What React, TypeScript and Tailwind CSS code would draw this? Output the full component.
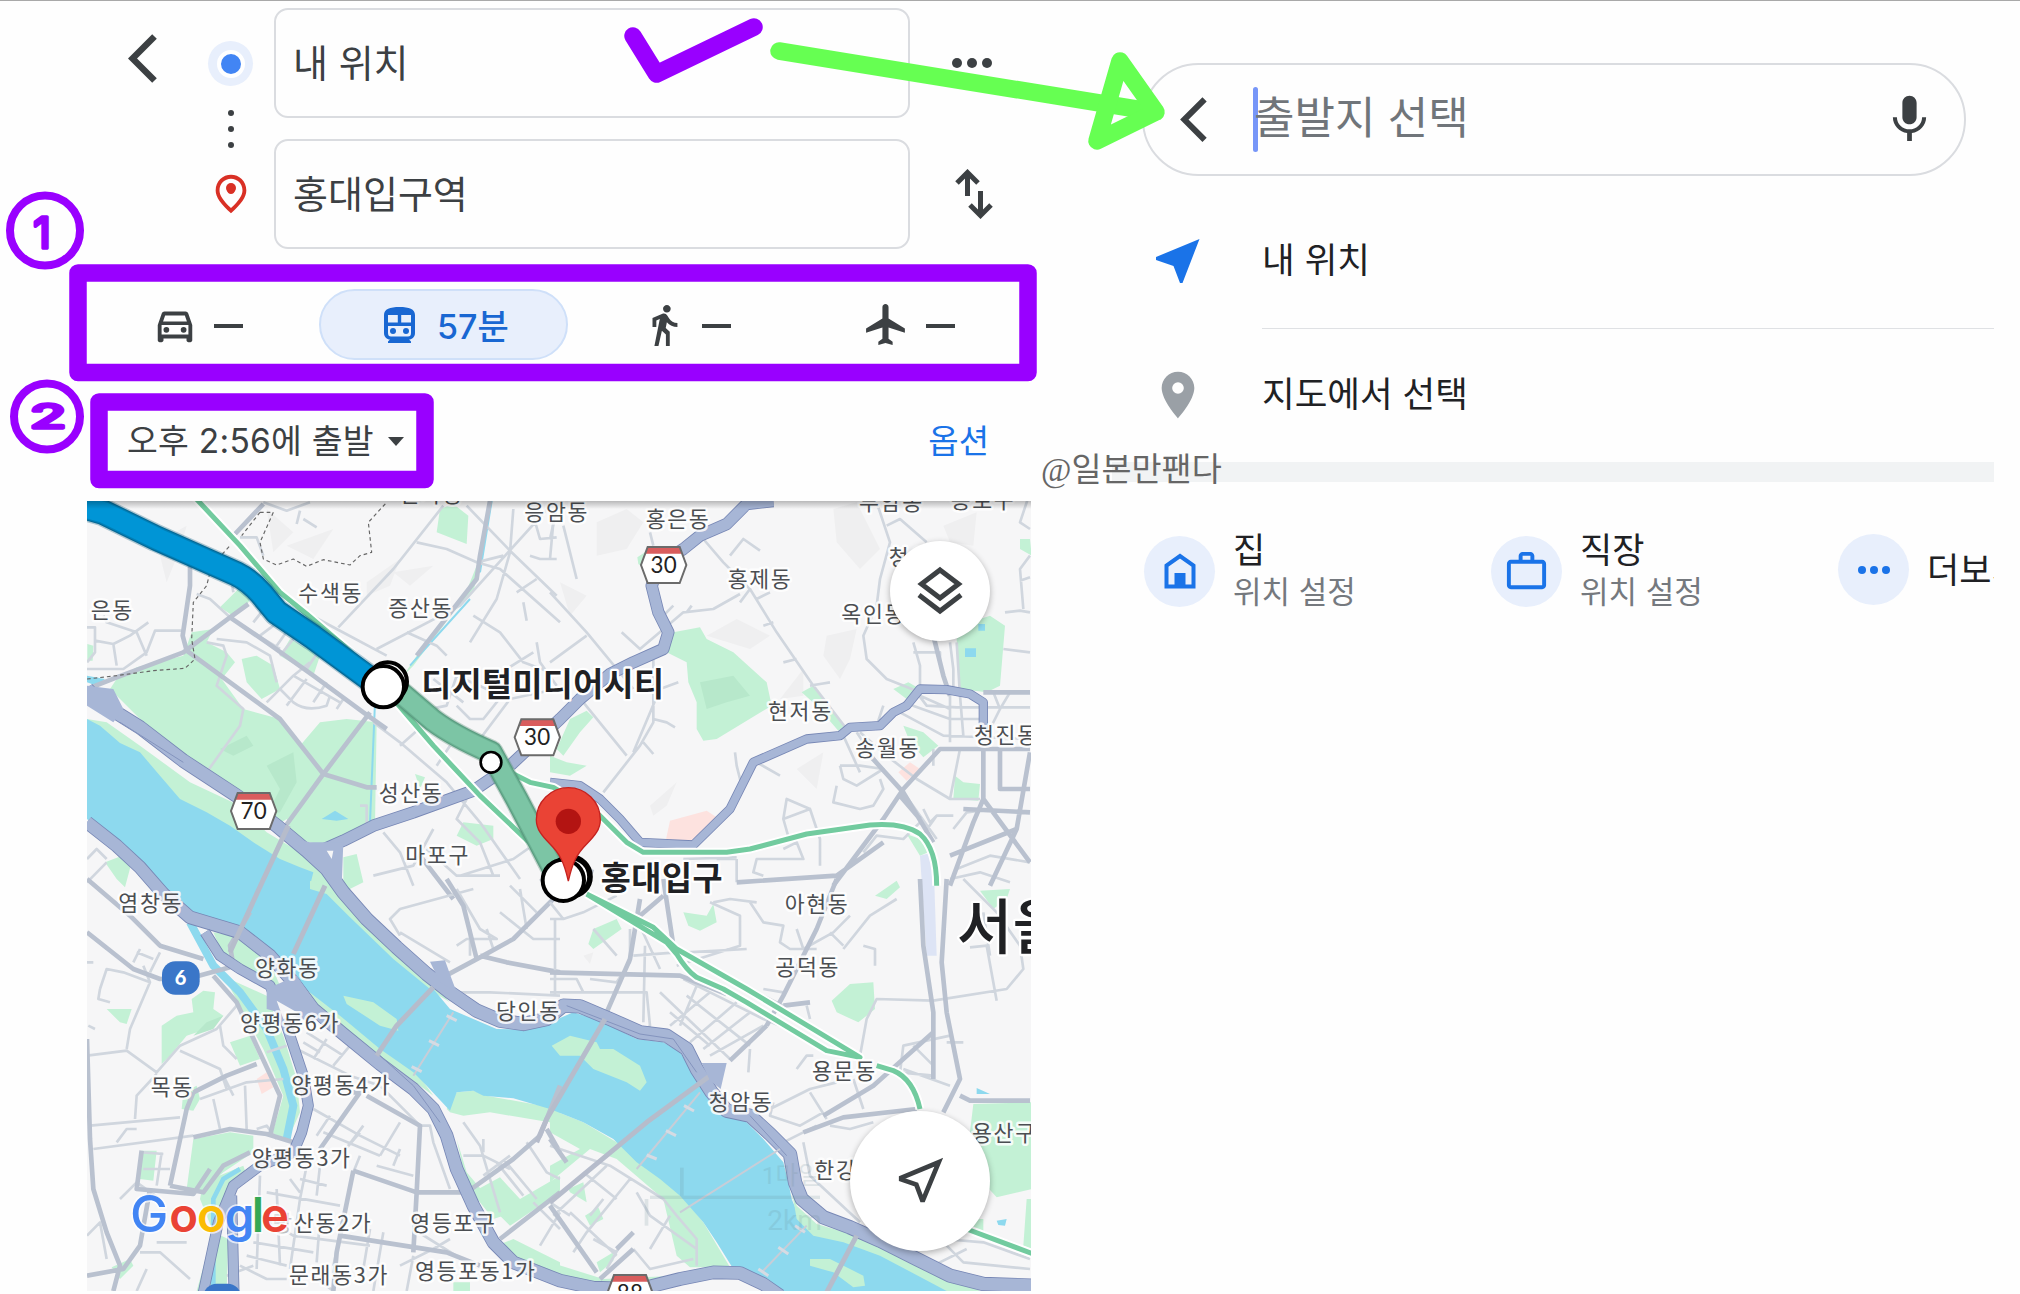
import type { ReactNode } from "react";
import {
  MdDirectionsWalk,
  MdFlight,
  MdMic,
  MdOutlineDirectionsCar,
  MdOutlinePlace,
  MdOutlineWorkOutline,
  MdPlace,
} from "react-icons/md";

// Map units are a third of a pixel; each tile keeps its own local origin.
const TILES = ["translate(0 0)", "translate(1410 0)", "translate(0 1170)", "translate(1410 1170)"];

const PARKS = [
  "M90 600L110 570L170 535L310 500L335 430L400 420L380 460L440 490L465 520L425 570L490 660L600 690L660 770L720 700L800 690L890 700L885 1010L820 1030L740 1070L640 1050L620 990L590 1010L480 930L400 860L310 800L180 690Z M420 355L475 300L510 330L500 350L455 378Z M485 510L530 500L580 530L600 600L545 630L500 580Z M630 450L720 500L700 560L600 500Z M1080 60L1120 45L1165 80L1160 165L1070 130Z M1210 180L1150 330L1000 530L970 560L1050 440L1180 310Z M1150 1000L1240 1010L1240 1050L1190 1070L1130 1040Z M790 1105L830 1095L850 1180L790 1210Z M75 1120L140 1095L155 1120L135 1195L110 1170Z M20 690L80 700L180 770L330 880L480 950L560 1030L660 1090L700 1130L760 1170L780 1210L720 1230L600 1130L480 1060L300 970L200 850L120 770Z M1005 855L1035 865L1020 900Z M22 465L40 470L38 515L22 515Z",
  "M370 430L450 415L470 450L550 490L650 580L665 650L500 750L460 755L440 720L440 640L415 580L410 520L350 490Z M755 610L790 590L885 710L865 725L800 650Z M1030 600L1075 580L1110 600L1070 630Z M1060 710L1120 730L1165 770L1120 805L1080 760Z M1220 450L1260 400L1320 380L1365 410L1350 590L1310 610L1230 600Z M1215 860L1240 880L1290 885L1285 935L1210 930Z M1070 1035L1110 1050L1135 1090L1110 1100Z M20 780L60 690L110 665L130 685L90 730L40 800Z M0 800L50 820L110 830L60 860L0 850Z M262 205L285 190L285 240L265 225Z M1410 150L1440 150L1445 200L1410 180Z",
  "M400 160L460 170L570 250L600 320L540 320L480 270L430 230Z M430 290L470 310L560 350L610 470L650 600L660 700L620 790L575 770L610 650L550 510L480 380Z M450 490L510 470L540 540L480 560Z M340 780L450 760L520 770L520 820L430 880L360 940L320 930Z M305 690L310 640L350 620L360 660L340 695Z M370 910L490 860L500 890L440 950L410 1020L350 1236L440 1236L445 1080L400 1060L360 960Z M335 360L370 335L405 340L400 390L430 410L380 450L320 470L270 530L245 555L245 440L290 410L340 400Z M80 390L155 390L140 435L120 430Z M185 815L230 815L220 905L180 900Z M690 0L760 20L900 170L1060 320L1110 370L1060 340L950 240L830 120L740 30Z M660 310L780 400L900 500L1010 580L1060 650L940 560L740 420Z M790 350L880 370L950 420L955 455L900 440L800 375Z M1100 690L1130 640L1180 635L1220 650L1440 690L1440 735L1230 700L1150 710L1110 700Z M1130 780L1160 880L1270 1010L1240 1020L1160 920Z M1195 930L1260 895L1320 960L1440 890L1440 940L1290 1040L1260 1010L1240 980Z M1250 1100L1300 1080L1440 1150L1440 1200L1320 1160Z M95 1165L150 1140L160 1160L120 1200Z M1120 1210L1170 1210L1170 1236L1120 1236Z M1415 500L1440 480L1440 515Z",
  "M5 500L60 470L140 490L150 510L190 510L270 560L290 610L270 635L230 610L130 570L90 530L30 530Z M0 690L100 730L200 790L260 840L370 920L460 1030L540 1165L420 1165L380 1130L340 960L200 840L120 810L0 910L0 860L90 810L0 760Z M55 930L100 910L110 970L60 940Z M105 1010L145 985L160 1020L120 1040Z M140 1150L190 1120L190 1145L150 1180Z M400 100L470 110L490 75L500 130L450 155L415 140Z M130 150L200 120L215 150L130 210L115 195Z M845 365L900 315L970 310L975 390L925 430L860 400Z M975 50L1040 5L1050 25L1010 60Z M1290 35L1380 30L1370 60L1330 90Z M1270 675L1445 670L1445 930L1340 955L1290 900L1255 800Z M715 900L730 970L790 1040L920 1080L1020 1100L1170 1180L1270 1236L1180 1236L980 1130L780 1060L740 1010Z M780 1140L840 1140L940 1190L945 1220L910 1225L850 1180L780 1160Z M1430 960L1445 960L1445 1110L1420 1100Z M0 1150L160 1200L380 1190L300 1225L170 1225L0 1180Z M1270 1020L1300 1020L1300 1060L1270 1060Z",
];

const BUILT = [
  "",
  "M360 995L470 965L500 985L430 1065L345 1065Z M1045 850L1080 820L1110 840L1070 875Z",
  "M530 600L560 580L580 625L545 645Z",
  "",
];

const HILLS = [
  "M240 200L285 130L320 110L300 180L260 280Z M620 170L760 120L700 210Z M860 280L960 210L930 290L860 320Z M560 60L640 130L580 190Z M940 250L1060 230L990 290Z",
  "M140 100L230 60L280 100L230 180L140 200Z M470 440L560 390L660 440L600 480Z M850 60L920 40L990 180L930 240L860 160Z M830 440L920 420L900 510L870 570L820 500Z M300 950L380 880L350 950L310 980Z M690 630L760 540L760 620Z M1180 110L1280 70L1270 170L1200 160Z M30 280L110 320L60 380Z M740 840L820 790L800 900Z",
  "",
  "M100 230L130 220L120 255Z",
];

const STREETS = [
  "M21 415H45V490L21 520 M45 455L100 465L150 440L205 400 M100 465L110 530 M21 540H130L200 490L225 425H305 M70 380L80 400L170 430L200 500 M350 315L390 330L450 385 M380 460L430 470L440 500L410 590L490 660L480 710L380 850 M390 230L450 250L460 310 M480 145H530L550 200 M550 40L620 65L690 40 M660 65L650 105 M670 90L710 115 M775 415L940 240L1090 50 M890 480L1140 350L1420 40 M1010 160L1100 180L1190 220L1270 200 M1160 50L1290 185L1430 320 M1300 60L1290 190L1250 330L1170 460 M1190 220L1260 240L1440 400 M1360 80L1380 150L1430 145 M1350 200L1380 210H1430 M1420 100L1410 210 M1310 310L1370 270 M1330 340L1340 395 M640 350L770 420L920 500 M520 400L560 350 M540 440L620 380 M590 470L640 400 M500 420L600 480 M640 450L600 500 M680 540L720 480 M560 640L640 560L690 520 M620 650L680 570 M600 600L640 640Q680 670 740 650L750 620 M700 640L740 580 M640 560L780 640 M770 660L790 630 M410 450L500 460L570 500L590 580 M880 700L960 760L1100 880L1200 1000L1320 1170 M1000 670L1100 650L1130 560L1220 600 M1130 650L1170 690H1210L1290 590 M960 770L1050 690 M1070 830L1110 770 M1060 570L1150 640 M1200 750L1290 630L1430 600 M840 950H860L860 1010 M910 1030L960 1090L1000 1190 M880 1160L1000 1130L1060 1020 M1040 1080L1130 1160H1260 M1140 1160L1300 1110L1400 1040 M1160 930L1130 990L1200 1060L1240 1160 M1270 900L1320 1000L1440 1160 M980 430L1070 470L1100 500 M1180 380L1260 430L1330 520L1440 560 M1370 460L1380 520L1430 590 M1280 540L1360 490 M21 1110L50 1080L80 1110 M21 1180L80 1120",
  "M0 150L20 60 M40 110L80 270 M0 310L110 430L250 600 M0 520L110 440 M215 430L270 480L400 370L490 360L570 315 M300 130L310 170 M410 370L425 350 M540 200L580 150L630 185 M330 390L370 350 M460 150L520 220L600 300L680 430L790 590L890 720 M600 300L570 340 M620 330L660 310 M640 410L670 400 M700 520L740 510 M780 590L810 585L840 580 M310 490V700L270 770L160 910 M310 690L350 700L375 715 M280 760L310 795 M250 790L330 600L385 580 M100 640L230 800 M555 790L560 830L575 890 M620 820L690 860 M980 40L1020 160L990 270L980 350L940 440L950 510L1010 570L1110 610 M1010 110L1050 90L1130 160 M1090 460L1110 530V620L1200 660 M1200 460L1210 540V600 M1220 460L1230 620L1240 740 M1170 520V490H1090 M1360 480L1440 490 M1365 370L1410 365L1440 370 M1440 10L1410 100L1440 120 M1440 200L1410 240L1420 360 M1410 275L1440 265 M1100 610L1130 650L1220 655H1440 M1060 640L1200 690H1290 M870 830L880 870L920 890L1000 840L930 830L870 830 M860 890L850 940L930 960L970 950L1000 900L990 870 M920 730L980 820L1060 910L1160 1050 M930 730L1010 800L1100 870L1200 930H1290 M1000 650L980 710 M1050 670L1180 740L1440 750 M1330 610L1350 660L1320 720 M1380 610L1350 660 M1200 620V760 M1150 780V830 M1230 780L1200 930 M1120 960L1140 1000L1160 980L1110 1050 M700 990L780 960L810 1050V1130 M780 960L710 930L700 990L720 1060 M560 1110V1180 M500 1110H560 M700 1080L740 1060L760 1110H620L610 1150L640 1160 M940 1090L980 1040L1060 1050L1110 1000 M1210 1020L1250 970L1330 960 M1220 1140L1320 1100L1440 1120 M1200 1170L1290 1150L1380 1180 M1160 980L1210 980 M880 740L930 850 M540 960L560 910 M400 1110L560 1105",
  "M21 530L140 515L230 580L300 500L410 450L470 380 M140 510L150 450L210 310L190 260 M170 220L220 240 M60 330L80 270L130 280L210 310 M60 330L55 360L90 370 M21 250L40 250 M25 440L45 450 M240 220L210 280 M180 210L160 250 M300 515L420 570L440 630 M420 440L430 500L470 540 M230 585L170 650L165 720 M30 740L300 715 M110 790L140 750L170 750 M40 810L340 770 M245 820L230 920 M190 870H270 M190 820L250 825 M360 660L500 610L610 600 M400 660L420 750 M495 620L500 750 M430 590L460 650 M530 750L560 740L590 780 M560 520L620 500 M650 510L810 590L900 620L1020 740 M680 460L790 530 M700 540L740 480 M670 490L720 520 M810 500L760 560 M700 690L840 770L960 830 M710 770L750 710 M790 820L850 740 M730 760L900 830 M840 760L780 830 M900 830L960 730 M940 860L960 810 M890 860L1000 890 M840 830L820 880 M540 890L530 1170 M590 930L600 1160 M630 900L660 940 M560 940L780 980 M680 860L660 960L630 1170 M720 860L710 950 M660 900L740 920 M820 880L760 1160 M870 1050L850 1170 M910 1060L880 1236 M540 1010L640 1070L870 1100 M520 1090L700 1120 M500 1130L620 1160 M720 1020L710 1150 M1000 1050L1160 1150 M1000 1130L980 1236 M960 1160L1060 1110L1110 1080 M1020 740L1050 740L1060 790L1110 930 M1150 730L1200 800L1260 1000 M1150 830L1210 830L1290 870 M1210 780V820 M1340 790L1400 880L1440 900 M1290 830L1210 890 M1250 850L1330 950 M1270 840L1370 960 M1360 970L1440 1050 M1300 1050L1360 1000 M1440 1000L1380 1100 M960 170L930 120L960 90L1180 30 M1130 30L1200 150L1250 180H1160L1130 200 M1220 150L1240 210 M960 160L1110 250 M1170 150V230 M1130 340L1230 340L1440 350 M1260 100L1360 180H1440 M1320 30L1340 150 M1290 20L1370 100 M21 1070L60 1030L80 1140 M120 960L170 910L240 960 M180 1120L240 1120L330 1200 M200 1170L170 1236 M230 1090L320 1090 M480 1160L560 1200H620 M440 1190L520 1160 M700 1190L760 1236 M1380 0L1440 70 M21 160L80 210",
  "M0 120L40 120L100 100L200 50 M15 120V350 M40 120L0 70 M190 100L260 120L330 270 M285 200L280 430 M250 230L380 220 M130 150L200 230 M380 260L570 200V110L480 70 M410 220L590 210 M600 70L640 130L700 140L690 190L720 210H800 M620 70L540 60L490 70 M740 150L760 210L850 160L900 110 M840 160L880 200 M880 210L960 110L1040 60 M940 200L975 210V260 M930 530L950 420L980 360L1150 365L1370 330L1420 270L1410 200L1340 100L1240 0 M1260 205L1310 200L1340 365 M1300 100L1320 230 M270 480L300 440L290 340L0 340 M100 340L80 300L0 300 M120 300L200 310L240 250L240 150 M390 440L440 320L400 300 M330 340L540 540 M410 350L600 500 M360 440L480 340 M420 490L560 370 M460 510L600 400 M480 530L640 440 M360 400L480 500 M440 320L640 420L740 460 M600 510L595 580 M740 570L770 530H790 M640 350L700 380 M640 330L700 340 M660 690L780 630L860 610 M670 670L660 710L750 740L820 700 M780 640L830 720 M910 600L940 690 M840 740L900 750L970 730 M700 790L800 740 M760 790L780 890L930 1030 M1150 590L1050 580L1060 500L1200 470 M1060 570L1200 620 M1090 500L1150 560 M1190 490H1240 M770 380L780 420 M0 800L180 860L340 960L380 1010L440 1080V1160 M170 860L10 1010 M240 900L110 1060L70 1120 M100 880L200 960 M60 1000L200 1130 M260 940L300 1010L440 1110 M160 960L120 1010 M130 1080L200 1120 M300 1110L360 1010 M250 1110L300 1170L430 1140 M210 1100L170 1170 M0 970L60 1010 M1180 1080L1300 1090L1440 1140 M1300 1060L1440 1120 M1190 1100L1240 1150L1440 1170 M1150 1160L1250 1110",
];

const ROADS = [
  "M330 215V290L308 440L320 485 M21 600L110 565L310 490L450 385L505 345 M450 385L560 460L700 560L850 670L920 720 M320 485L600 690L730 855L860 895H890 M870 670L730 855L610 1020 M465 135L550 45 M1230 36L1200 200L1190 270L1010 500 M1020 1100L1120 1230",
  "M1140 400L1180 560L1200 620 M1300 610L1440 610 M850 1190L1000 990L1060 900L1170 780H1440 M1300 780V930L1270 1000L1200 1190 M1350 780V900H1440 M1440 790L1400 1020L1320 1190 M1300 930L1440 1120 M1200 1100L1400 1020 M960 800L1060 910L1150 1060 M1050 920L1110 990 M560 1180L860 1160L1000 1060 M1240 960L1440 970 M0 1110L130 1150",
  "M21 160L160 270L240 300L340 295L450 265 M21 0L150 110L240 200L370 240 M21 480L30 780L40 930L80 1060L120 1160L100 1236 M340 775L450 750L560 765L640 790 M340 640L320 690L270 920 M340 640L440 590L530 555 M185 815L170 930L340 945L390 870 M270 920L370 940L430 860L510 820 M210 930L180 1100L130 1170L21 1190 M400 290L470 370L530 500L600 650L570 770 M460 260L450 200L510 100 M1160 940L1300 840L1380 770L1440 620 M820 875L1010 940L1160 940 M820 640L840 640L720 810 M860 650L1020 740L1010 940L1000 1120 M820 875L770 1120L760 1236 M780 1070L1100 1120L1200 1160 M1400 750L1440 820 M1200 235L1300 180L1440 40 M1060 310L1200 235 M1190 240L1150 80L1100 0 M1200 230L1280 250L1440 280 M1260 1080L1440 940",
  "M0 280L390 290L530 345 M340 0L370 200 M270 110L340 50 M170 400L240 240L270 60 M650 440L700 350L800 150L860 0 M540 545L650 440 M700 380L780 370 M1110 0L1120 200L1150 400V600 M1190 0L1175 250L1190 400L1230 600L1180 700 M1230 650L1260 665H1440 M1150 460L970 620L820 710 M760 760L880 715L1100 690 M0 980L140 1180 M250 1110L150 1200 M200 1110L250 1060 M0 780L50 850",
];

const HIGHWAYS = [
  { w: 38, d: "M21 600L60 640L180 715L310 815L470 920L590 1010L680 1085L740 1140L790 1210L860 1290L950 1375L1040 1455L1110 1510L1190 1565L1260 1595L1330 1605L1400 1590L1450 1550L1500 1552L1590 1590L1680 1630L1760 1640L1820 1680L1850 1740L1895 1810L1940 1865L2010 1880L2070 1935L2130 1995L2145 2080L2165 2130L2230 2185L2310 2215L2400 2255L2510 2310L2610 2360L2710 2385L2860 2390" },
  { w: 36, d: "M21 1000L110 1070L180 1135L250 1215L330 1285L480 1330L570 1400L640 1480L700 1560L790 1635L900 1725L1000 1800L1060 1860L1100 1940L1130 2040L1180 2150L1240 2260L1300 2320L1440 2375L1540 2396L1680 2400L1800 2370L1900 2350L1980 2352L2050 2385L2100 2420" },
  { w: 32, d: "M700 1095L790 1055L880 1010L1000 970L1180 905L1290 830L1440 690L1500 630L1590 555L1660 520L1750 480L1765 430L1735 370L1715 290L1740 225L1810 180L1860 140L1940 105L2000 45L2080 36" },
  { w: 23, d: "M1410 880L1500 890L1560 930L1620 990L1680 1060L1840 1068L1950 960L2020 820L2180 750L2280 740L2310 715L2400 710L2440 670L2480 650L2520 600L2600 602L2670 615L2710 640V720" },
  { w: 28, d: "M375 1330L420 1400L480 1440L570 1490L620 1610L670 1760L685 1850L665 1930L640 1990L540 2030L460 2090L415 2200L370 2410 M455 2120L462 2410" },
];

const RAILS = [
  "M340 20L480 170L600 310L680 375L780 460L870 540",
  "M940 630L1060 770L1200 920L1400 1110",
  "M1290 850L1350 880L1420 895L1560 980L1640 1060L1690 1090H1940L2010 1080L2180 1035L2370 1008Q2470 1000 2520 1035Q2570 1080 2570 1190",
  "M1520 1215L1720 1315L1790 1380L2000 1500L2340 1705L2240 1685L2000 1540L1930 1500L1850 1465Q1820 1445 1790 1395L1760 1360L1520 1215",
  "M2390 1730L2440 1745Q2500 1770 2520 1860",
  "M2660 2220L2860 2295",
];

const BRIDGES = [
  "M625 1010L530 1215L450 1390",
  "M735 1190L640 1395",
  "M1060 1495L950 1610L890 1700",
  "M1575 1590L1400 1890L1370 1960",
  "M1890 1760L1700 1900L1410 2140",
  "M2330 2240L2240 2410",
];

const BLUE_LEG = "M0 50L70 70L230 148L470 255Q510 275 545 315L590 370L700 445L900 592";
const GREEN_LEG = "M960 610L1060 695Q1120 740 1233 790L1310 930L1420 1140";

const LABELS: [number, number, string][] = [
  [655, 337, "수색동"], [925, 380, "증산동"], [32, 386, "은동"], [1333, 92, "응암동"], [958, 38, "신사동"],
  [1697, 114, "홍은동"], [1943, 293, "홍제동"], [2337, 62, "부암동"], [2612, 56, "종로구"], [2426, 228, "청운동"],
  [2284, 398, "옥인동"], [2064, 691, "현저동"], [2326, 801, "송월동"], [2682, 763, "청진동"], [896, 935, "성산동"],
  [976, 1123, "마포구"], [115, 1265, "염창동"], [525, 1461, "양화동"], [480, 1625, "양평동6가"], [1248, 1589, "당인동"],
  [212, 1819, "목동"], [634, 1811, "양평동4가"], [515, 2030, "양평동3가"], [642, 2226, "산동2가"], [991, 2226, "영등포구"],
  [627, 2381, "문래동3가"], [1005, 2370, "영등포동1가"], [2114, 1268, "아현동"], [2086, 1459, "공덕동"], [2196, 1771, "용문동"],
  [1886, 1863, "청암동"], [2676, 1956, "용산구"], [2203, 2068, "한강로동"],
];

function Shield({ x, y, text }: { x: number; y: number; text: string }) {
  return (
    <g transform={`translate(${x} ${y})`}>
      <path d="M-48 -54H48L68 0L48 54H-48L-68 0Z" fill="#fff" />
      <path d="M-48 -52H48L55 -34H-55Z" fill="#d95d5d" />
      <path d="M-48 -54H48L68 0L48 54H-48L-68 0Z" fill="none" stroke="#6b6b6b" strokeWidth="6" />
      <text y="24" textAnchor="middle" fontSize="67" letterSpacing="1" fill="#222" className="font-['Lato']">
        {text}
      </text>
    </g>
  );
}

function RouteMap() {
  return (
    <svg viewBox="21 36 2832 2370" className="block h-[790px] w-[944px]">
      <rect x="21" y="36" width="2832" height="2370" fill="#f6f6f7" />

      {TILES.map((t, i) => (
        <g key={i} transform={t}>
          <path d={HILLS[i]} fill="#efeff0" />
          <path d={PARKS[i]} fill="#c3f1d5" />
          <path d={BUILT[i]} fill="#fde2df" />
        </g>
      ))}
      <path d="M420 780L500 740L520 770L460 800Z M560 830L640 790L650 880L600 970L560 980L600 900Z M1860 580L1960 560L2010 620L1940 640L1880 660Z M380 1600L430 1580L400 1620L340 1640Z" fill="#b7e8cb" />

      {/* Han river and its branches */}
      <path
        d="M21 690L60 710L120 762L180 790L240 860L300 930L380 970L450 1010L520 1060L600 1110L660 1135L700 1150L690 1190L750 1210L830 1290L950 1410L1060 1500L1110 1560L1180 1590L1250 1620L1330 1622L1410 1600L1480 1570L1560 1595L1670 1650L1750 1660L1800 1690L1850 1770L1890 1840L1940 1880L1990 1890L2050 1950L2110 2020L2125 2080L2135 2130L2160 2190L2210 2230L2310 2250L2410 2290L2540 2350L2620 2406H2090L2030 2365L1960 2340L1910 2260L1870 2200L1800 2120L1740 2070L1670 2020L1600 1950L1510 1900L1410 1860L1300 1828L1210 1820L1180 1805L1130 1810L1110 1865L1040 1790L1000 1750L900 1680L780 1580L650 1480L570 1400L480 1330L400 1310L310 1280L240 1200L120 1075L21 990Z"
        fill="#8dd9ee"
      />
      <g fill="none" stroke="#8dd9ee" strokeWidth="24">
        <path d="M330 1300L400 1430L480 1510L560 1620L610 1740L640 1850L620 1950" />
        <path d="M480 2040L430 2070L400 2130L400 2406" strokeWidth="14" />
        <path d="M885 640L870 1000M1235 36L1200 250M1170 330L990 530" strokeWidth="6" />
      </g>
      <path d="M21 560L75 570L50 590L21 580Z M725 990L765 965L805 990L770 995Z M2655 478H2688V504H2655Z M2695 405H2715V425H2695Z M2690 1797L2730 1815H2690Z M2750 2195L2780 2190L2775 2210L2755 2208Z" fill="#8dd9ee" />
      <path d="M790 1520L880 1540L950 1590L955 1625L900 1610L800 1545Z M1415 1670L1470 1640L1550 1660L1560 1680L1600 1680L1680 1730L1700 1780L1680 1805L1640 1780L1540 1740L1500 1700L1440 1700Z M2190 2310L2250 2310L2350 2360L2355 2390L2320 2395L2260 2350L2190 2330Z" fill="#c3f1d5" />
      <path d="M690 1175L740 1200L900 1345L1060 1490L1050 1500L940 1410L810 1285L740 1215L690 1200Z M2128 2060L2150 2150L2210 2205L2330 2240L2500 2310L2660 2385L2700 2406H2600L2400 2300L2290 2260L2200 2240L2150 2190Z" fill="#c3f1d5" />
      <path d="M2520 1100L2560 1090L2570 1400L2540 1400Z" fill="#dde4f5" />

      <g fill="none" strokeLinejoin="round">
        {TILES.map((t, i) => (
          <g key={i} transform={t}>
            <path d={STREETS[i]} stroke="#d0d6de" strokeWidth="8" />
            <path d={ROADS[i]} stroke="#b9c1cf" strokeWidth="14" />
          </g>
        ))}
        <path
          d="M21 570L110 560L220 545L315 538L345 510L335 450L340 340L380 290L395 230L450 170M540 70L580 70L540 160L550 210L590 228L640 210L680 232L730 212L810 228L840 200L875 190L865 100L920 40M540 70L485 140"
          stroke="#666"
          strokeWidth="3.5"
          strokeDasharray="11 9"
        />
        {HIGHWAYS.map((h) => (
          <g key={h.d}>
            <path d={h.d} stroke="#7787b5" strokeWidth={h.w + 5} />
            <path d={h.d} stroke="#a7b6d6" strokeWidth={h.w} />
          </g>
        ))}
        <path d="M120 700L310 820M1460 1550L1680 1635L1780 1650L1850 1750M2010 1880L2120 2000M900 1700L1000 1790L1080 1900" stroke="#8494be" strokeWidth="3" />
        <path d={BRIDGES.join("")} stroke="#b6bccb" strokeWidth="15" />
        <path d="M1120 1570L1000 1760M1860 1810L1670 2040M2100 1980L1800 2170M2180 2210L2045 2350" stroke="#c8cdd7" strokeWidth="6" />
        <path d="M1100 1580L1130 1595M1047 1655L1077 1670M995 1733L1025 1748M1812 1850L1842 1866M1758 1925L1788 1940M1700 1998L1730 2010M2095 2275L2125 2295M2035 2340L2065 2360M2145 2210L2175 2230" stroke="#d6dbe3" strokeWidth="9" />
      </g>

      {/* interchanges */}
      <path d="M21 590L100 600L130 660L100 700L21 650Z M560 1500L650 1460L720 1560L700 1600L560 1560Z M640 1050L690 1060L790 1060L785 1190L740 1160Z M1865 1722H1940L1922 1800L1890 1775Z M1050 1418L1095 1414L1115 1470L1130 1510L1080 1480Z" fill="#a7b6d6" />
      <path d="M590 1535L660 1575L610 1590Z M740 1085L760 1085L755 1110Z" fill="#f6f6f7" />

      {/* metro lines */}
      <g fill="none" strokeLinejoin="round">
        {RAILS.map((d) => (
          <path key={d} d={d} stroke="#fff" strokeWidth="27" />
        ))}
        {RAILS.map((d) => (
          <path key={d} d={d} stroke="#72cb9f" strokeWidth="15" />
        ))}
      </g>

      {/* faded scale bar */}
      <g fill="#6a8a94" opacity="0.17">
        <rect x="1710" y="2120" width="510" height="10" />
        <rect x="1800" y="2036" width="11" height="88" />
        <rect x="1694" y="2130" width="11" height="80" />
        <text x="2045" y="2086" fontSize="74" className="font-['Roboto','Noto_Sans_CJK_KR',sans-serif]">1마일</text>
        <text x="2062" y="2222" fontSize="84" className="font-['Roboto',sans-serif]">2km</text>
      </g>

      <g
        fontSize="65"
        letterSpacing="5"
        fill="#4b4e52"
        stroke="#fff"
        strokeOpacity="0.85"
        strokeWidth="15"
        strokeLinejoin="round"
        paintOrder="stroke"
        className="font-['Noto_Sans_CJK_KR',sans-serif]"
      >
        <text x="577" y="2226" fillOpacity="0.35">당</text>
        {LABELS.map(([x, y, name]) => (
          <text key={name} x={x} y={y}>
            {name}
          </text>
        ))}
      </g>

      {/* selected route */}
      <g fill="none" strokeLinejoin="round">
        <path d={BLUE_LEG} stroke="#04587e" strokeOpacity="0.3" strokeWidth="84" />
        <path d={BLUE_LEG} stroke="#056794" strokeWidth="76" />
        <path d={BLUE_LEG} stroke="#0080b8" strokeWidth="69" />
        <path d={BLUE_LEG} stroke="#0095d6" strokeWidth="62" />
        <path d={GREEN_LEG} stroke="#4f8a70" strokeOpacity="0.35" strokeWidth="76" />
        <path d={GREEN_LEG} stroke="#5a9c80" strokeWidth="69" />
        <path d={GREEN_LEG} stroke="#6bb293" strokeWidth="62" />
        <path d={GREEN_LEG} stroke="#7cc5a5" strokeWidth="55" />
      </g>
      <g fill="#fff" stroke="#000">
        <circle cx="923" cy="578" r="58" strokeWidth="12" />
        <circle cx="910" cy="593" r="62" strokeWidth="12" />
        <circle cx="1233" cy="820" r="31" strokeWidth="8" />
        <circle cx="1472" cy="1163" r="58" strokeWidth="17" />
        <circle cx="1450" cy="1174" r="62" strokeWidth="12" />
      </g>
      <path d="M1465 1176C1452 1120 1440 1095 1410 1065C1385 1040 1369 1020 1369 992A96 96 0 0 1 1561 992C1561 1020 1545 1040 1520 1065C1490 1095 1478 1120 1465 1176Z" fill="#ea4335" stroke="#c5221f" strokeWidth="4" />
      <circle cx="1465" cy="997" r="38" fill="#b31412" />

      <Shield x={1751} y={228} text="30" />
      <Shield x={1372} y={745} text="30" />
      <Shield x={521} y={966} text="70" />
      <Shield x={1650} y={2412} text="88" />
      <rect x="246" y="1417" width="113" height="100" rx="40" fill="#3a76c8" />
      <text x="302" y="1489" textAnchor="middle" fontSize="60" fontWeight="900" fill="#fff" className="font-['Lato']">6</text>
      <rect x="370" y="2384" width="113" height="100" rx="40" fill="#3a76c8" />

      <g fill="#202124" stroke="#fff" strokeWidth="14" strokeLinejoin="round" paintOrder="stroke" fontWeight="700" className="font-['Noto_Sans_CJK_KR',sans-serif]">
        <text x="1024" y="621" fontSize="98" textLength="728">디지털미디어시티</text>
        <text x="1562" y="1203" fontSize="98" textLength="366">홍대입구</text>
        <text x="2630" y="1381" fontSize="182" fontWeight="500">서울</text>
      </g>

      <text y="2229" fontSize="142" fontWeight="600" stroke="#fff" strokeWidth="10" strokeOpacity="0.7" paintOrder="stroke" className="font-['Inter',sans-serif]">
        <tspan x="150" fontSize="154" fontWeight="500" fill="#4285f4">G</tspan>
        <tspan x="268" fill="#ea4335">o</tspan>
        <tspan x="351" fill="#fbbc04">o</tspan>
        <tspan x="434" fill="#4285f4">g</tspan>
        <tspan x="515" fill="#34a853">l</tspan>
        <tspan x="543" fill="#ea4335">e</tspan>
      </text>
    </svg>
  );
}

function BackChevron({ className }: { className: string }) {
  return (
    <svg viewBox="0 0 30 50" className={className}>
      <path d="M26.500 2.500L4.500 24.500L26.500 46.500" fill="none" stroke="#3c4043" strokeWidth="6.500" />
    </svg>
  );
}

function TrainIcon() {
  return (
    <svg viewBox="0 0 31 36" className="h-9 w-[31px]">
      <path
        fillRule="evenodd"
        fill="#1967d2"
        d="M0 8C0 2 6 0 15.500 0S31 2 31 8V26C31 30 28 32.500 25 32.500L27 34.500V36H4V34.500L6 32.500C3 32.500 0 30 0 26ZM4 8V15.500H13.800V8ZM17.200 8V15.500H27V8ZM4 19V26Q4 29.500 7 29.500H24Q27 29.500 27 26V19Z"
      />
      <circle cx="9" cy="24" r="3" fill="#1967d2" />
      <circle cx="22" cy="24" r="3" fill="#1967d2" />
    </svg>
  );
}

function Mode({ icon, className }: { icon: ReactNode; className: string }) {
  return (
    <div className={`flex h-full items-center pt-[5px] text-[#3c4043] ${className}`}>
      {icon}
      <span className="mt-[3px] h-1 w-[29px] bg-[#3c4043]" />
    </div>
  );
}

function DirectionsPanel() {
  return (
    <section className="flex w-[1031px] shrink-0 flex-col">
      <div className="flex h-[264px] items-start pt-2">
        <BackChevron className="mt-[26px] ml-32 h-[50px] w-[30px]" />
        <div className="ml-[50px] flex w-[45px] flex-col items-center pt-[33px]">
          <div className="flex size-[45px] items-center justify-center rounded-full bg-[#e8effc]">
            <div className="size-7 rounded-full border-4 border-white bg-[#4285f4]" />
          </div>
          <div className="mt-6 flex flex-col gap-2.5">
            <span className="size-1.5 rounded-full bg-[#3c4043]" />
            <span className="size-1.5 rounded-full bg-[#3c4043]" />
            <span className="size-1.5 rounded-full bg-[#3c4043]" />
          </div>
          <div className="relative mt-[23px]">
            <MdOutlinePlace className="size-[46px] text-[#d93025]" />
            <span className="absolute top-[12px] left-[18px] size-2.5 rounded-full bg-[#d93025]" />
          </div>
        </div>
        <div className="ml-[21px] flex w-[636px] flex-col gap-[21px] text-[38px] text-[#3c4043]">
          <div className="flex h-[110px] items-center rounded-[14px] border-2 border-[#dadce0] pl-[17px]">내 위치</div>
          <div className="flex h-[110px] items-center rounded-[14px] border-2 border-[#dadce0] pl-[17px]">홍대입구역</div>
        </div>
        <div className="ml-[42px] flex flex-col items-center">
          <div className="mt-[50px] mr-[3px] flex gap-[5px]">
            <span className="size-2.5 rounded-full bg-[#3c4043]" />
            <span className="size-2.5 rounded-full bg-[#3c4043]" />
            <span className="size-2.5 rounded-full bg-[#3c4043]" />
          </div>
          <svg viewBox="0 0 38 50" className="mt-[101px] h-[50px] w-[38px]" fill="none" stroke="#3c4043" strokeWidth="5">
            <path d="M12.500 27V4M2 14L12.500 3.500L23 14" />
            <path d="M25.500 22V46M15 36L25.500 46.500L36 36" />
          </svg>
        </div>
      </div>

      <div className="flex h-[118px] items-center pb-0.5">
        <Mode className="ml-[152px] w-[167px] gap-4" icon={<MdOutlineDirectionsCar className="size-[46px]" />} />
        <div className="mt-[5px] flex h-[71px] w-[249px] items-center gap-[22px] rounded-full border-2 border-[#cfe0f9] bg-[#e8effc] pl-[63px] text-[34px] font-medium text-[#1967d2]">
          <TrainIcon />
          <span className="pt-[3px]">57분</span>
        </div>
        <Mode className="ml-[73px] gap-[15px]" icon={<MdDirectionsWalk className="size-[46px]" />} />
        <Mode className="ml-[131px] gap-[15px]" icon={<MdFlight className="size-[49px]" />} />
      </div>

      <div className="flex h-[120px] items-center justify-between pr-[42px] pb-px pl-[127px] text-[33.5px] text-[#3c4043]">
        <div className="flex items-center gap-3.5">
          <span className="tracking-[0.25px]">오후 2:56에 출발</span>
          <span className="border-x-8 border-t-[9px] border-x-transparent border-t-[#3c4043]" />
        </div>
        <span className="text-[33px] text-[#1a73e8]">옵션</span>
      </div>

      <div className="relative -mt-px ml-[87px] h-[790px] overflow-hidden">
        <RouteMap />
        <div className="absolute inset-x-0 top-0 h-2 bg-linear-to-b from-black/25 to-transparent" />
        <button className="absolute top-10 left-[803px] flex size-[100px] items-center justify-center rounded-full bg-white shadow-[0_2px_6px_rgba(0,0,0,0.3)]">
          <svg viewBox="0 0 46 50" className="h-[50px] w-[46px]" fill="none" stroke="#3c4043" strokeWidth="5">
            <path d="M23 4L41.500 18L23 32L4.500 18Z" />
            <path d="M2 29L23 45L44 29" />
          </svg>
        </button>
        <button className="absolute top-[610px] left-[763px] flex size-[140px] items-center justify-center rounded-full bg-white shadow-[0_2px_6px_rgba(0,0,0,0.3)]">
          <svg viewBox="0 0 46 46" className="size-[48px]" fill="none" stroke="#3c4043" strokeWidth="4.500">
            <path d="M41 5L5 20V21.500L19.500 26.500L25 41H26Z" />
          </svg>
        </button>
      </div>
    </section>
  );
}

function QuickPlace({ icon, title, sub, className }: { icon: ReactNode; title: string; sub?: string; className: string }) {
  return (
    <div className={`flex items-center gap-[18px] ${className}`}>
      <div className="flex size-[71px] shrink-0 items-center justify-center rounded-full bg-[#e8effc] text-[#1a73e8]">{icon}</div>
      <div className="whitespace-nowrap">
        <div className="text-[35px] leading-[42px] text-[#202124]">{title}</div>
        {sub && <div className="text-[31px] leading-[42px] text-[#75797e]">{sub}</div>}
      </div>
    </div>
  );
}

function OriginPanel() {
  return (
    <section className="flex w-[882px] flex-col overflow-hidden pt-[63px]">
      <div className="ml-[30px] flex h-[113px] w-[824px] shrink-0 items-center rounded-full border-2 border-[#dadce0] pr-[26px] pl-[36px]">
        <BackChevron className="h-[46px] w-7" />
        <span className="ml-[45px] h-[65px] w-[5px] rounded-full bg-[#7796f8]" />
        <span className="-ml-1 flex-1 pb-1 text-[44px] text-[#70757a]">출발지 선택</span>
        <MdMic className="size-[57px] text-[#3c4043]" />
      </div>
      <div className="flex h-[152px] shrink-0 items-center pt-[18px]">
        <svg viewBox="0 0 44 44" className="ml-11 size-11">
          <path d="M43.500 0L0 18V21L17.500 27L24 44H26.500Z" fill="#1a73e8" />
        </svg>
        <div className="ml-[62px] text-[35.5px] text-[#202124]">내 위치</div>
      </div>
      <div className="ml-[150px] h-px shrink-0 bg-[#dfe1e4]" />
      <div className="flex h-[133px] shrink-0 items-center pb-0.5">
        <MdPlace className="ml-[38px] size-[56px] text-[#9aa0a6]" />
        <div className="ml-14 text-[35.5px] text-[#202124]">지도에서 선택</div>
      </div>
      <div className="h-5 shrink-0 bg-[#f1f3f4]" />
      <div className="flex pt-12">
        <QuickPlace
          className="-mt-px ml-8 w-[347px] shrink-0"
          title="집"
          sub="위치 설정"
          icon={
            <svg viewBox="0 0 32 36" className="h-9 w-8">
              <path d="M2.500 33.500V12.500L16 3L29.500 12.500V33.500Z" fill="none" stroke="currentColor" strokeWidth="4" />
              <path d="M10.500 20H21.500V33H10.500Z" fill="currentColor" />
            </svg>
          }
        />
        <QuickPlace className="-mt-px w-[347px] shrink-0" title="직장" sub="위치 설정" icon={<MdOutlineWorkOutline className="size-[47px]" />} />
        <QuickPlace
          className="-mt-1 shrink-0"
          title="더보기"
          icon={
            <div className="flex gap-1">
              <span className="size-2 rounded-full bg-[#1a73e8]" />
              <span className="size-2 rounded-full bg-[#1a73e8]" />
              <span className="size-2 rounded-full bg-[#1a73e8]" />
            </div>
          }
        />
      </div>
    </section>
  );
}

function Annotations() {
  return (
    <svg viewBox="0 0 2020 1294" className="pointer-events-none absolute inset-0 h-[1294px] w-[2020px]">
      <g fill="none" stroke="#9900ff" strokeLinecap="round" strokeLinejoin="round">
        <rect x="78" y="273" width="950" height="99.500" strokeWidth="17.500" />
        <rect x="99" y="402" width="326" height="77.500" strokeWidth="17.500" />
        <circle cx="45" cy="230.500" r="35" strokeWidth="8" />
        <circle cx="47" cy="416.500" r="33" strokeWidth="8" />
        <path d="M633 36L656.500 74L754 27" strokeWidth="17.500" />
      </g>
      <g fill="#9900ff" stroke="#9900ff" strokeWidth="3.500" strokeLinejoin="round" textAnchor="middle" fontWeight="400" className="font-['Inter',sans-serif]">
        <text x="42" y="248" fontSize="43">1</text>
        <text x="48" y="428" fontSize="32" textLength="36" lengthAdjust="spacingAndGlyphs">2</text>
      </g>
      <g fill="none" stroke="#66ff52" strokeWidth="17.500" strokeLinecap="round" strokeLinejoin="round">
        <path d="M779 51L1155 112" />
        <path d="M1120 61L1156 112L1097 141Z" />
      </g>
      <text x="1041" y="481" fontSize="33" fill="#666">
        <tspan className="font-['Liberation_Serif',serif]">@</tspan>
        <tspan className="font-['Noto_Sans_CJK_KR',sans-serif]" fontSize="32.700">일본만팬다</tspan>
      </text>
    </svg>
  );
}

export default function App() {
  return (
    <main className="relative h-[1294px] w-[2020px] overflow-hidden bg-[#fefefe] font-['Inter','Noto_Sans_CJK_KR',sans-serif]">
      <div className="absolute inset-x-0 top-0 h-px bg-[#a9a9a9]" />
      <div className="flex gap-[81px]">
        <DirectionsPanel />
        <OriginPanel />
      </div>
      <Annotations />
    </main>
  );
}
